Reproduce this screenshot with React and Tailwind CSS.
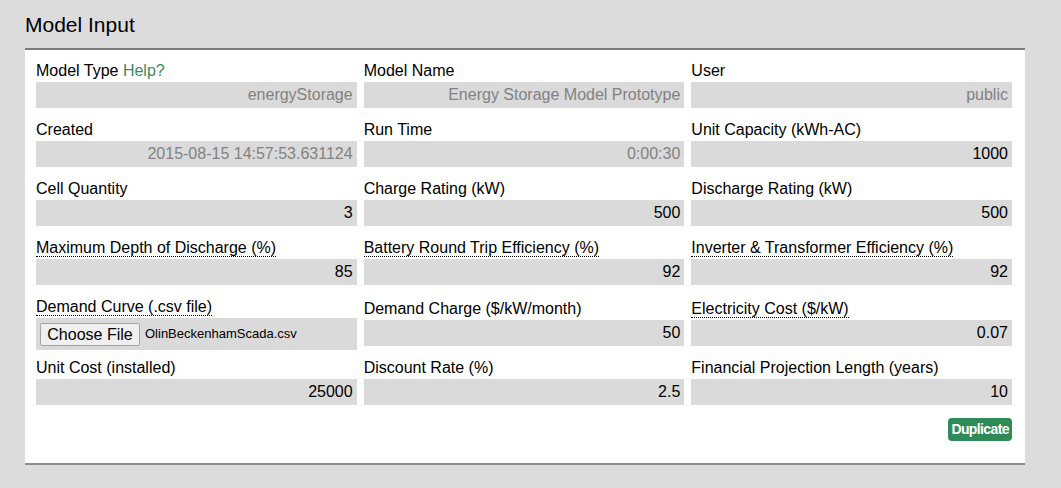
const fields = [
    { label: 'Model Type', help: true, value: 'energyStorage', disabled: true },
    { label: 'Model Name', value: 'Energy Storage Model Prototype', disabled: true },
    { label: 'User', value: 'public', disabled: true },
    { label: 'Created', value: '2015-08-15 14:57:53.631124', disabled: true },
    { label: 'Run Time', value: '0:00:30', disabled: true },
    { label: 'Unit Capacity (kWh-AC)', value: '1000' },
    { label: 'Cell Quantity', value: '3' },
    { label: 'Charge Rating (kW)', value: '500' },
    { label: 'Discharge Rating (kW)', value: '500' },
    { label: 'Maximum Depth of Discharge (%)', value: '85', dotted: true },
    { label: 'Battery Round Trip Efficiency (%)', value: '92', dotted: true },
    { label: 'Inverter & Transformer Efficiency (%)', value: '92', dotted: true },
    { label: 'Demand Curve (.csv file)', file: 'OlinBeckenhamScada.csv', dotted: true },
    { label: 'Demand Charge ($/kW/month)', value: '50' },
    { label: 'Electricity Cost ($/kW)', value: '0.07', dotted: true },
    { label: 'Unit Cost (installed)', value: '25000' },
    { label: 'Discount Rate (%)', value: '2.5' },
    { label: 'Financial Projection Length (years)', value: '10' },
];

const Field = ({ field }) => {
    return (
        <div className="flex flex-col">
            {/* Label */}
            <div className="h-[18px] leading-[18px] text-[16px] text-black mb-[2px] whitespace-nowrap">
                <span className={field.dotted ? 'border-b border-dotted border-black' : ''}>
                    {field.label}
                </span>
                {field.help && (
                    <>
                        {' '}
                        <a href="#" className="text-[#3b8a5e]">Help?</a>
                    </>
                )}
            </div>

            {/* Input */}
            {field.file ? (
                <div className="h-[32px] -mb-[4px] bg-[#dadada] flex items-center pl-[4px] gap-[5px]">
                    <button className="h-[23px] w-[100px] border border-[#a3a3a3] rounded-[2px] bg-[#efefef] text-[16px] leading-[21px] text-black">
                        Choose File
                    </button>
                    <span className="text-[13px] text-black">{field.file}</span>
                </div>
            ) : (
                <div
                    className={
                        'h-[26px] leading-[26px] bg-[#dadada] text-[16px] text-right pr-[4px] whitespace-nowrap overflow-hidden ' +
                        (field.disabled ? 'text-[#828282]' : 'text-black')
                    }
                >
                    {field.value}
                </div>
            )}
        </div>
    );
};

const App = () => {
    return (
        <div
            className="min-h-screen bg-[#dcdcdc] pt-[13px] pb-[20px]"
            style={{ fontFamily: '"Liberation Sans", Arial, sans-serif' }}
        >
            {/* Header */}
            <h1 className="ml-[25px] text-[21px] leading-[24px] font-normal text-black mb-[11px]">
                Model Input
            </h1>

            {/* Panel */}
            <div className="ml-[25px] w-[1000px] bg-white border-t-2 border-b-2 border-t-[#7b7b7b] border-b-[#8c8c8c] pt-[12px] pl-[11px] pr-[13px] pb-[22px]">
                <div className="grid grid-cols-3 gap-x-[7px] gap-y-[13px] items-end">
                    {fields.map((f) => (
                        <Field key={f.label} field={f} />
                    ))}
                </div>

                {/* Actions */}
                <div className="flex justify-end mt-[13px]">
                    <button className="h-[23px] px-[3px] rounded-[4px] bg-[#2e8b57] text-white text-[14px] font-bold tracking-[-0.6px] leading-[23px]">
                        Duplicate
                    </button>
                </div>
            </div>
        </div>
    );
};

export default App;
